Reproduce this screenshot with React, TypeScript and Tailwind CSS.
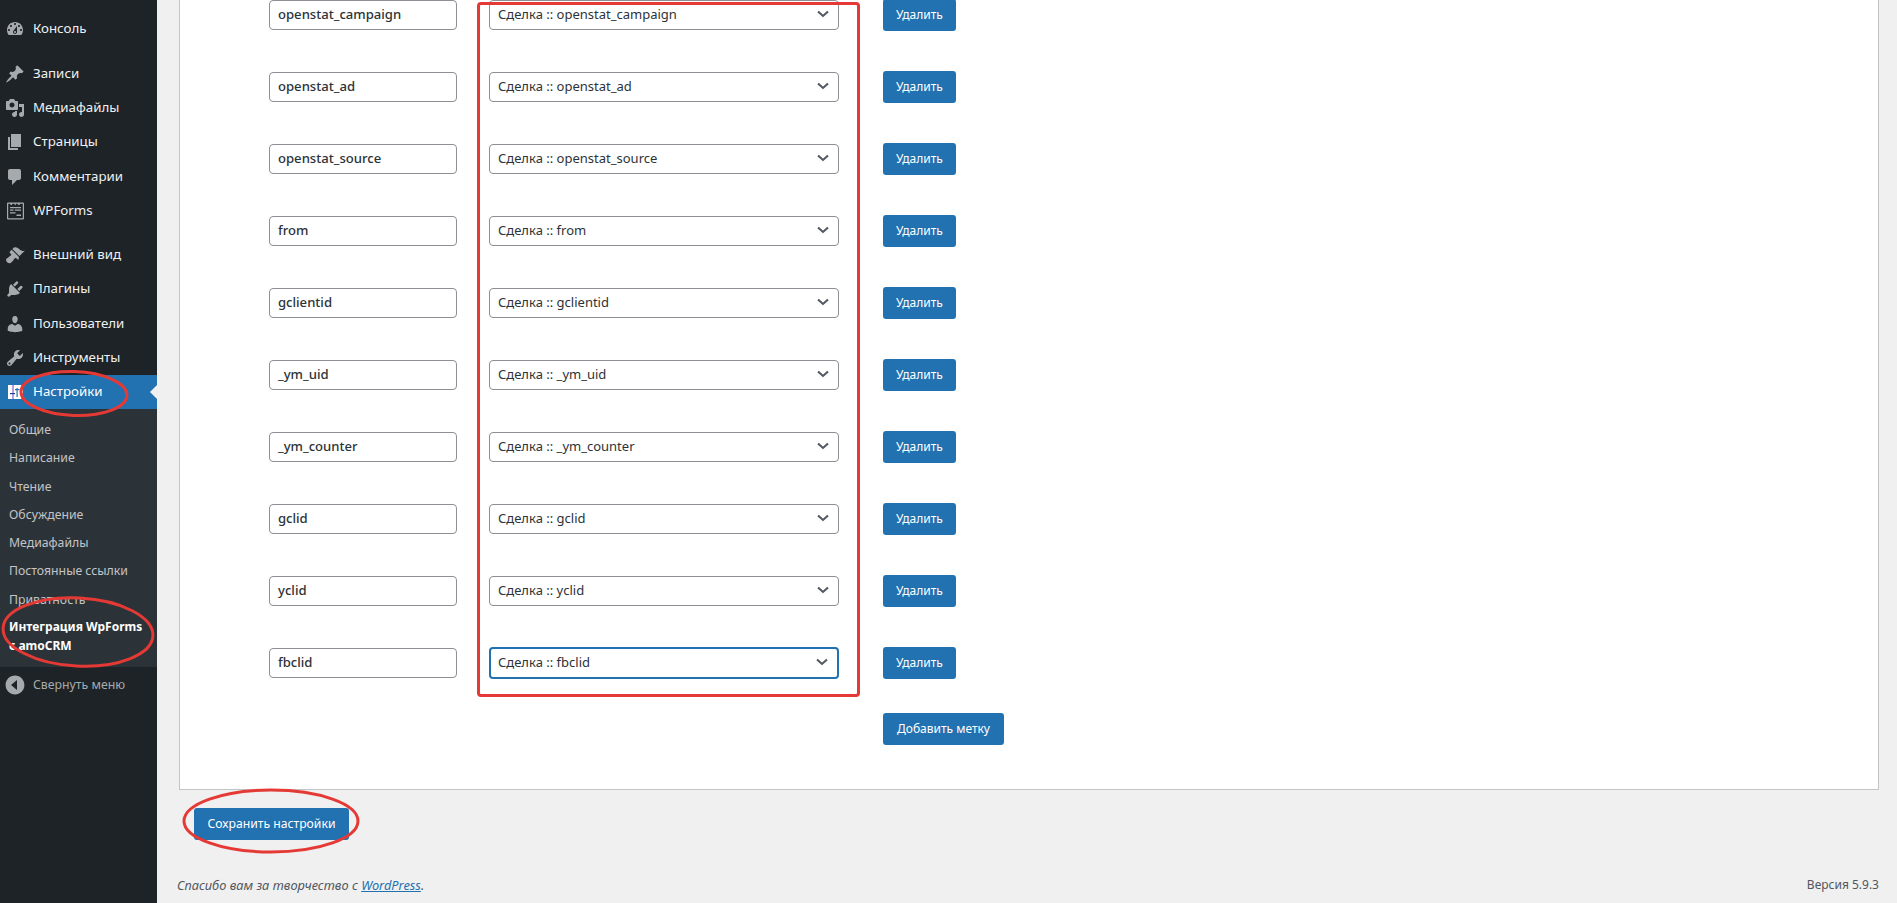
const FONT = "font-['Noto_Sans','Open_Sans',sans-serif]";

const icons: Record<string, string> = {
  dashboard:
    "M3.76 16h12.48c1.1-1.37 1.76-3.11 1.76-5 0-4.42-3.58-8-8-8s-8 3.58-8 8c0 1.89.66 3.63 1.76 5zM10 4c.55 0 1 .45 1 1s-.45 1-1 1-1-.45-1-1 .45-1 1-1zM6 6c.55 0 1 .45 1 1s-.45 1-1 1-1-.45-1-1 .45-1 1-1zm8 0c.55 0 1 .45 1 1s-.45 1-1 1-1-.45-1-1 .45-1 1-1zm-5.37 5.55L12 7v6c0 1.1-.9 2-2 2s-2-.9-2-2c0-.57.24-1.08.63-1.45zM4 10c.55 0 1 .45 1 1s-.45 1-1 1-1-.45-1-1 .45-1 1-1zm12 0c.55 0 1 .45 1 1s-.45 1-1 1-1-.45-1-1 .45-1 1-1zm-5 3c0-.55-.45-1-1-1s-1 .45-1 1 .45 1 1 1 1-.45 1-1z",
  post: "M10.44 3.02l1.82-1.82 6.36 6.35-1.83 1.82c-1.05-.68-2.48-.57-3.41.36l-.75.75c-.92.93-1.04 2.35-.35 3.41l-1.83 1.82-2.41-2.41-2.8 2.79c-.42.42-3.38 2.71-3.8 2.29s1.86-3.39 2.28-3.81l2.79-2.79L4.1 9.36l1.83-1.82c1.05.69 2.48.57 3.4-.36l.75-.75c.93-.92 1.05-2.35.36-3.41z",
  media:
    "M13 11V4c0-.55-.45-1-1-1h-1.67L9 1H5L3.67 3H2c-.55 0-1 .45-1 1v7c0 .55.45 1 1 1h10c.55 0 1-.45 1-1zM7 4.5c1.38 0 2.5 1.12 2.5 2.5S8.38 9.5 7 9.5 4.5 8.38 4.5 7 5.62 4.5 7 4.5zM14 6h5v10.5c0 1.38-1.12 2.5-2.5 2.5S14 17.88 14 16.5s1.12-2.5 2.5-2.5c.17 0 .34.02.5.05V9h-3V6zm-4 8.05V13h2v3.5c0 1.38-1.12 2.5-2.5 2.5S7 17.88 7 16.5 8.12 14 9.5 14c.17 0 .34.02.5.05z",
  page: "M6 15V2h10v13H6zm-1 1h8v2H3V5h2v11z",
  comments: "M5 2h9c1.1 0 2 .9 2 2v7c0 1.1-.9 2-2 2h-2l-5 5v-5H5c-1.1 0-2-.9-2-2V4c0-1.1.9-2 2-2z",
  wpforms:
    "M3 1.500h15a1 1 0 0 1 1 1v15a1 1 0 0 1-1 1H3a1 1 0 0 1-1-1v-15a1 1 0 0 1 1-1zm.2 1.200v14.600h14.600V2.700h-2.300l-1.600 1.500-1.500-1.500h-1.300L10.500 4.200 9 2.700H7.700L6.200 4.200 4.700 2.700H3.200zM5 6h11v1.200H5V6zm0 2.600h3.500v1.200H5V8.600zm4.800 0H16v1.200H9.800V8.600zM5 11.300h5.500v1.200H5v-1.200zm6.500 2.200H16v1.500h-4.500v-1.500z",
  appearance:
    "M14.48 11.060L7.410 3.990l1.500-1.500c.5-.56 2.300-.47 3.510.32 1.210.8 1.430 1.280 2.910 2.100 1.180.64 2.450 1.260 4.450.85zm-.71.71L6.700 4.700 4.930 6.470c-.39.39-.39 1.020 0 1.410l1.060 1.060c.39.39.39 1.030 0 1.420-.6.6-1.430 1.110-2.210 1.690-.35.26-.7.53-1.010.84C1.430 13.230 1 14.030 1 14.850c0 .82.45 1.620 1.120 2.290.67.67 1.470 1.120 2.290 1.120.82 0 1.620-.43 2.930-1.770.31-.31.58-.66.84-1.010.58-.78 1.090-1.610 1.690-2.210.39-.39 1.030-.39 1.420 0l1.060 1.060c.39.39 1.020.39 1.410 0z",
  plugins:
    "M13.110 4.360L9.870 7.600 8 5.730l3.240-3.240c.35-.34 1.050-.2 1.560.32.52.51.66 1.210.31 1.550zm-8 1.770l.91-1.120 9.010 9.010-1.190.84c-.71.71-2.630 1.160-3.820 1.160H6.140L4.900 17.260c-.59.59-1.540.59-2.120 0-.59-.58-.59-1.530 0-2.120l1.240-1.240v-3.880c0-1.130.4-3.190 1.090-3.890zm7.260 3.970l3.240-3.240c.34-.35 1.040-.21 1.550.31.52.51.66 1.210.31 1.550l-3.240 3.250z",
  users:
    "M10 9.250c-2.270 0-2.730-3.440-2.730-3.440C7 4.020 7.820 2 9.970 2c2.160 0 2.980 2.020 2.710 3.810 0 0-.41 3.440-2.680 3.440zm0 2.570L12.720 10c2.390 0 4.520 2.330 4.520 4.530v2.490s-3.650 1.130-7.240 1.130c-3.650 0-7.240-1.130-7.240-1.130v-2.490c0-2.250 1.940-4.480 4.470-4.480z",
  tools:
    "M16.680 9.770c-1.340 1.340-3.300 1.670-4.950.99l-5.410 6.520c-.99.99-2.590.99-3.580 0s-.99-2.590 0-3.570l6.520-5.420c-.68-1.650-.35-3.610.99-4.950 1.280-1.280 3.120-1.620 4.720-1.060l-2.890 2.890 2.820 2.820 2.860-2.870c.53 1.580.18 3.390-1.080 4.650zM3.810 16.210c.4.39 1.040.39 1.430 0 .4-.4.4-1.040 0-1.430-.39-.4-1.030-.4-1.430 0-.39.39-.39 1.030 0 1.430z",
  collapse:
    "M10 .6c5.200 0 9.400 4.200 9.400 9.400s-4.200 9.400-9.400 9.400S.6 15.200.6 10 4.800.6 10 .6zm2 4.400l-6 5 6 5V5z",
};

function Icon({ name }: { name: string }) {
  return (
    <svg viewBox="0 0 20 20" className="w-[20px] h-[20px] shrink-0 fill-[#a7aaad]" fillRule="evenodd">
      <path d={icons[name]} />
    </svg>
  );
}

function SettingsIcon() {
  return (
    <svg viewBox="0 0 20 20" className="w-[20px] h-[20px] shrink-0">
      <rect x="3" y="3" width="15" height="14" fill="#ffffff" />
      <rect x="7.500" y="3" width="1" height="14" fill="#7a3fb5" />
      <rect x="16" y="3" width="1" height="14" fill="#b79ad8" />
      <rect x="5" y="11" width="5" height="1.200" fill="#23408f" />
      <rect x="11.500" y="6" width="1.200" height="9" fill="#2271b1" />
      <rect x="10" y="7" width="4.500" height="1.200" fill="#2271b1" />
    </svg>
  );
}

function MenuItem({ icon, label }: { icon: string; label: string }) {
  return (
    <div className="h-[34.25px] flex items-center pl-[5px] text-[#f0f0f1] text-[13.3px]">
      <Icon name={icon} />
      <span className="ml-[8px]">{label}</span>
    </div>
  );
}

function SubItem({ label }: { label: string }) {
  return <div className="h-[28.3px] flex items-center pl-[9px] text-[12.25px] text-[#c3c4c7]">{label}</div>;
}

const rows = [
  "openstat_campaign",
  "openstat_ad",
  "openstat_source",
  "from",
  "gclientid",
  "_ym_uid",
  "_ym_counter",
  "gclid",
  "yclid",
  "fbclid",
];

function Chevron() {
  return (
    <svg viewBox="0 0 16 16" className="w-[16px] h-[16px] absolute right-[7px] top-[5px] fill-none stroke-[#50575e] stroke-[2]">
      <path d="M3 5.500l5 4.500 5-4.500" />
    </svg>
  );
}

function Row({ name, focused }: { name: string; focused?: boolean }) {
  return (
    <div className="flex items-center h-[32px] mb-[40px]">
      <div className="ml-[89px] w-[188px] h-[30px] border border-[#8c8f94] rounded-[4px] bg-white flex items-center px-[8px] text-[13.1px] font-medium text-[#2c3338]">
        {name}
      </div>
      <div
        className={
          focused
            ? "relative ml-[32px] w-[350px] h-[32px] border-2 border-[#2271b1] rounded-[4px] bg-white flex items-center pl-[7px] text-[13px] text-[#2c3338]"
            : "relative ml-[32px] w-[350px] h-[30px] border border-[#8c8f94] rounded-[4px] bg-white flex items-center pl-[8px] text-[13px] text-[#2c3338]"
        }
      >
        Сделка :: {name}
        <Chevron />
      </div>
      <button className="ml-[44px] w-[73px] h-[32px] bg-[#2271b1] rounded-[3px] text-white text-[12px]">Удалить</button>
    </div>
  );
}

export default function App() {
  return (
    <div className={`relative h-[903px] w-[1897px] overflow-hidden flex bg-[#f0f0f1] ${FONT}`}>
      <aside className="w-[157px] shrink-0 bg-[#1d2327] pt-[12px]">
        <MenuItem icon="dashboard" label="Консоль" />
        <div className="h-[10.500px]" />
        <MenuItem icon="post" label="Записи" />
        <MenuItem icon="media" label="Медиафайлы" />
        <MenuItem icon="page" label="Страницы" />
        <MenuItem icon="comments" label="Комментарии" />
        <MenuItem icon="wpforms" label="WPForms" />
        <div className="h-[10px]" />
        <MenuItem icon="appearance" label="Внешний вид" />
        <MenuItem icon="plugins" label="Плагины" />
        <MenuItem icon="users" label="Пользователи" />
        <MenuItem icon="tools" label="Инструменты" />
        <div className="relative h-[34px] flex items-center pl-[5px] bg-[#2271b1] text-white text-[13.3px]">
          <SettingsIcon />
          <span className="ml-[8px]">Настройки</span>
          <div className="absolute right-0 top-[10px] w-0 h-0 border-y-[7px] border-y-transparent border-r-[7px] border-r-[#f0f0f1]" />
        </div>
        <div className="bg-[#2c3338] pt-[7px] pb-[12px]">
          <SubItem label="Общие" />
          <SubItem label="Написание" />
          <SubItem label="Чтение" />
          <SubItem label="Обсуждение" />
          <SubItem label="Медиафайлы" />
          <SubItem label="Постоянные ссылки" />
          <SubItem label="Приватность" />
          <div className="pl-[9px] pt-[3px] text-[12px] leading-[19px] font-bold text-white">
            Интеграция WpForms
            <br />с amoCRM
          </div>
        </div>
        <div className="h-[36px] flex items-center pl-[5px] text-[#a7aaad] text-[12.3px]">
          <Icon name="collapse" />
          <span className="ml-[8px]">Свернуть меню</span>
        </div>
      </aside>

      <main className="flex-1 pl-[22px] pr-[18px] flex flex-col">
        <section className="h-[791px] bg-white border-x border-b border-[#c3c4c7] -mt-[1px]">
          {rows.map((r) => (
            <Row key={r} name={r} focused={r === "fbclid"} />
          ))}
          <button className="block -mt-[6px] ml-[703px] w-[121px] h-[32px] bg-[#2271b1] rounded-[3px] text-white text-[12px]">
            Добавить метку
          </button>
        </section>
        <button className="mt-[18px] ml-[15px] w-[155px] h-[32px] bg-[#2271b1] rounded-[3px] text-white text-[12.2px]">
          Сохранить настройки
        </button>
        <div className="mt-[36px] -ml-[2px] flex justify-between text-[#50575e]">
          <span className="italic text-[12.8px]">
            Спасибо вам за творчество с <span className="underline text-[#2271b1]">WordPress</span>.
          </span>
          <span className="text-[12px]">Версия 5.9.3</span>
        </div>
      </main>

      <div className="absolute left-[477px] top-[2px] w-[383px] h-[695px] border-[3px] border-[#e53935] rounded-[4px]" />
      <svg viewBox="0 0 1897 903" className="absolute inset-0 w-[1897px] h-[903px] pointer-events-none fill-none stroke-[#e53935] stroke-[3]">
        <ellipse cx="74" cy="393.500" rx="53" ry="22" transform="rotate(2 74 393)" />
        <ellipse cx="78" cy="632" rx="75" ry="34" transform="rotate(3 78 632)" />
        <ellipse cx="271" cy="821" rx="87" ry="31" />
      </svg>
    </div>
  );
}
